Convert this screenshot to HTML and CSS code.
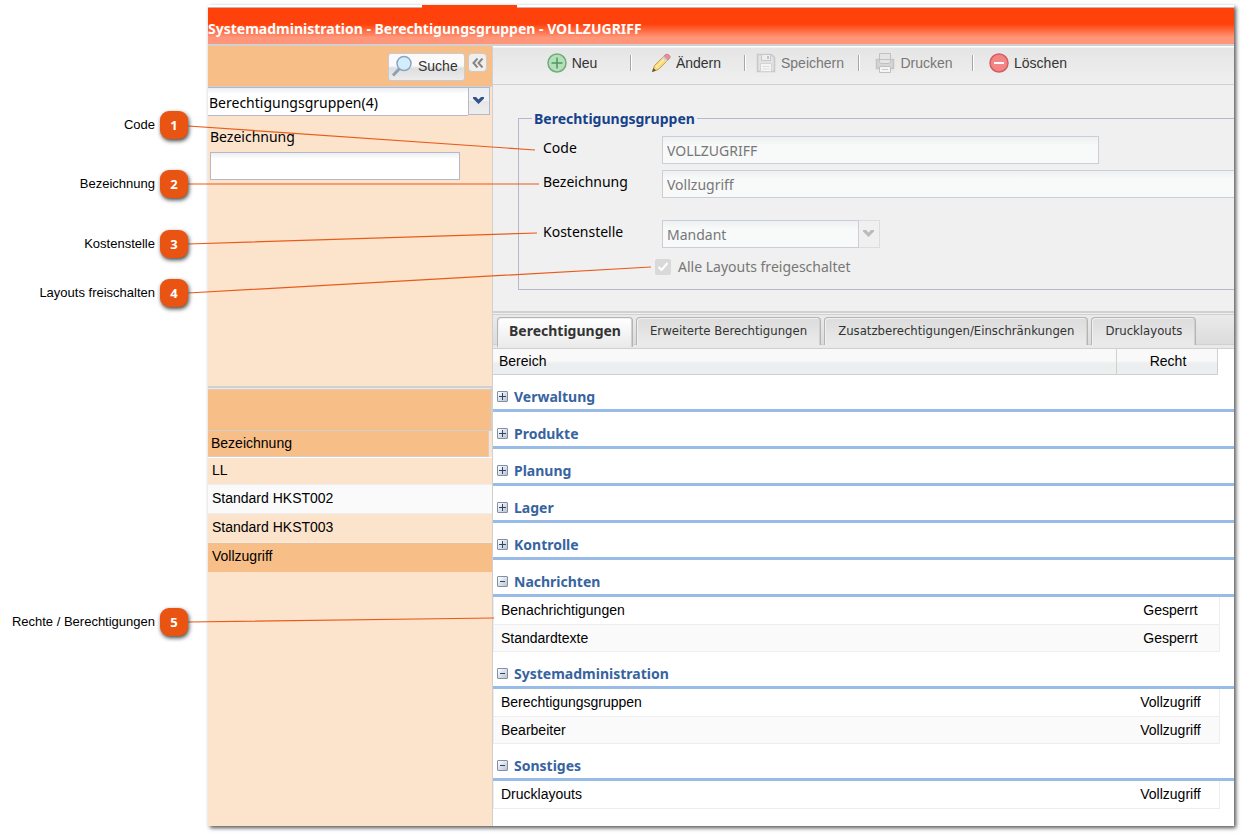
FILE: index.html
```html
<!DOCTYPE html>
<html lang="de">
<head>
<meta charset="utf-8">
<title>Systemadministration - Berechtigungsgruppen</title>
<link rel="stylesheet" href="styles.css">
</head>
<body>
<div class="page">
  <div class="window">
    <header class="titlebar">
      <div class="titlebar-edge"></div>
      <h1 class="title">Systemadministration - Berechtigungsgruppen - VOLLZUGRIFF</h1>
    </header>
    <div class="body">
      <aside class="sidebar">
        <div class="search-bar">
          <button class="search-button" type="button">
            <svg width="22" height="22" viewBox="0 0 22 22"><path d="M2 20.500L9 13" stroke="#8fa0b2" stroke-width="3"/><circle cx="13" cy="8.500" r="7" fill="#d3edfd" stroke="#8aa5bf" stroke-width="1.500"/></svg>
            Suche
          </button>
          <button class="collapse-button" type="button" aria-label="Einklappen">
            <svg width="12" height="10" viewBox="0 0 12 10"><path d="M5.500 0.500L1.500 5L5.500 9.500M10.500 0.500L6.500 5L10.500 9.500" fill="none" stroke="#858585" stroke-width="2"/></svg>
          </button>
        </div>
        <div class="combo">
          <select class="combo-field" aria-label="Suchbereich"><option>Berechtigungsgruppen(4)</option></select>
          <span class="combo-trigger"><svg width="11" height="7" viewBox="0 0 11 7"><path d="M0 0H3L5.500 2.500L8 0H11V1.500L5.500 7L0 1.500Z" fill="#34518d"/></svg></span>
        </div>
        <div class="filter">
          <label for="filter-name">Bezeichnung</label>
          <input class="field" id="filter-name" type="text">
        </div>
        <div class="results">
          <div class="results-bar"></div>
          <table class="result-table">
            <thead><tr><th><span>Bezeichnung</span></th></tr></thead>
            <tbody>
              <tr><td>LL</td></tr>
              <tr class="alt"><td>Standard HKST002</td></tr>
              <tr><td>Standard HKST003</td></tr>
              <tr class="selected"><td>Vollzugriff</td></tr>
            </tbody>
          </table>
        </div>
      </aside>
      <main class="main">
        <div class="toolbar">
          <button class="tool" type="button">
            <svg width="20" height="20" viewBox="0 0 20 20"><circle cx="10" cy="10" r="9" fill="#b5dfb9" stroke="#6fac7b" stroke-width="1.500"/><path d="M10 4.500V15.500M4.500 10H15.500" stroke="#4b9862" stroke-width="1.500"/></svg>
            Neu</button>
          <span class="sep"></span>
          <button class="tool" type="button">
            <svg width="20" height="20" viewBox="0 0 20 20"><path d="M1.500 18.500L3.500 12.500L13.500 2.500L17.500 6.500L7.500 16.500Z" fill="#fbd977" stroke="#c1a15a"/><path d="M5 14.500L15 4.500" stroke="#fff0ad" stroke-width="1.500"/><path d="M12.500 3.500L14.500 1.500Q16 0.500 18 2T18.500 5.500L16.500 7.500Z" fill="#e98f91" stroke="#c9878a"/><path d="M12 4L16 8" stroke="#c9d4dc" stroke-width="2"/><path d="M1 19L2.500 15L5 17.500Z" fill="#5b5147"/></svg>
            Ändern</button>
          <span class="sep"></span>
          <button class="tool" type="button" disabled>
            <svg width="20" height="20" viewBox="0 0 20 20"><path d="M1.500 1.500H15.500L18.500 4.500V18.500H1.500Z" fill="#e2e2e2" stroke="#c8c8c8" stroke-width="1.500"/><path d="M5.500 1.500H14.500V7.500H5.500Z" fill="#eee" stroke="#c8c8c8"/><path d="M11 3H13V6H11Z" fill="#c4c4c4"/><path d="M4.500 10.500H15.500V18.500H4.500Z" fill="#f5f5f5" stroke="#d4d4d4"/><path d="M6.500 13.500H13.500M6.500 16H13.500" stroke="#ddd"/></svg>
            Speichern</button>
          <span class="sep"></span>
          <button class="tool" type="button" disabled>
            <svg width="20" height="20" viewBox="0 0 20 20"><path d="M1.500 6.500H18.500V15.500H1.500Z" fill="#d6d6d6" stroke="#c4c4c4" stroke-width="1.500"/><path d="M4.500 0.500H15.500V8.500Q15.500 10.500 13.500 10.500H6.500Q4.500 10.500 4.500 8.500Z" fill="#e5e5e5" stroke="#c0c0c0"/><path d="M5 6.500H15" stroke="#c0c0c0"/><path d="M4.500 13.500H15.500V19.500H4.500Z" fill="#f4f4f4" stroke="#c0c0c0"/><path d="M7 16.500H13" stroke="#ccc"/></svg>
            Drucken</button>
          <span class="sep"></span>
          <button class="tool" type="button">
            <svg width="20" height="20" viewBox="0 0 20 20"><circle cx="10" cy="10" r="9" fill="#f58484" stroke="#cf5f63" stroke-width="1.500"/><path d="M5 10H15" stroke="#fff" stroke-width="2"/></svg>
            Löschen</button>
        </div>
        <form class="form">
          <fieldset class="group-box">
            <legend>Berechtigungsgruppen</legend>
            <div class="form-row"><label for="code">Code</label><input class="field code-field" id="code" type="text" value="VOLLZUGRIFF" disabled></div>
            <div class="form-row"><label for="name">Bezeichnung</label><input class="field name-field" id="name" type="text" value="Vollzugriff" disabled></div>
            <div class="form-row spaced"><label for="cost">Kostenstelle</label>
              <div class="combo disabled">
                <select class="combo-field" id="cost" disabled><option>Mandant</option></select>
                <span class="combo-trigger"><svg width="11" height="7" viewBox="0 0 11 7"><path d="M0 0H3L5.500 2.500L8 0H11V1.500L5.500 7L0 1.500Z" fill="#bbb"/></svg></span>
              </div>
            </div>
            <label class="check"><input type="checkbox" checked disabled><svg width="16" height="16" viewBox="0 0 16 16"><path d="M3.500 8L6.500 11L12.500 4" fill="none" stroke="#fff" stroke-width="2"/></svg>Alle Layouts freigeschaltet</label>
          </fieldset>
        </form>
        <div class="tabs" role="tablist">
          <button class="tab active" type="button" role="tab" aria-selected="true">Berechtigungen</button>
          <button class="tab" type="button" role="tab">Erweiterte Berechtigungen</button>
          <button class="tab" type="button" role="tab">Zusatzberechtigungen/Einschränkungen</button>
          <button class="tab" type="button" role="tab">Drucklayouts</button>
        </div>
        <div class="rights">
          <table class="rights-head"><tr><th>Bereich</th><th class="right-col">Recht</th></tr></table>
          <button class="section closed" type="button"><span class="toggle"></span>Verwaltung</button>
          <button class="section closed" type="button"><span class="toggle"></span>Produkte</button>
          <button class="section closed" type="button"><span class="toggle"></span>Planung</button>
          <button class="section closed" type="button"><span class="toggle"></span>Lager</button>
          <button class="section closed" type="button"><span class="toggle"></span>Kontrolle</button>
          <button class="section" type="button"><span class="toggle"></span>Nachrichten</button>
          <table class="rights-table">
            <tr><td>Benachrichtigungen</td><td class="right-col">Gesperrt</td></tr>
            <tr><td>Standardtexte</td><td class="right-col">Gesperrt</td></tr>
          </table>
          <button class="section" type="button"><span class="toggle"></span>Systemadministration</button>
          <table class="rights-table">
            <tr><td>Berechtigungsgruppen</td><td class="right-col">Vollzugriff</td></tr>
            <tr><td>Bearbeiter</td><td class="right-col">Vollzugriff</td></tr>
          </table>
          <button class="section" type="button"><span class="toggle"></span>Sonstiges</button>
          <table class="rights-table">
            <tr><td>Drucklayouts</td><td class="right-col">Vollzugriff</td></tr>
          </table>
        </div>
      </main>
    </div>
  </div>
  <svg class="leaders" width="660" height="640" viewBox="0 0 660 640">
    <path d="M188 126L535 150M188 184H539M188 244L537 233M188 293L651 267M188 622L494 618" fill="none" stroke="#ea5b1b" stroke-width="1.200"/>
  </svg>
  <div class="callout c1">Code<span class="badge">1</span></div>
  <div class="callout c2">Bezeichnung<span class="badge">2</span></div>
  <div class="callout c3">Kostenstelle<span class="badge">3</span></div>
  <div class="callout c4">Layouts freischalten<span class="badge">4</span></div>
  <div class="callout c5">Rechte / Berechtigungen<span class="badge">5</span></div>
</div>
</body>
</html>
```
FILE: styles.css
```css
* { box-sizing: border-box; }

:root {
  --sans: "Liberation Sans", Arial, sans-serif;
  --ui: "Noto Sans", Tahoma, sans-serif;
  --line: #d0d0d0;
  --field-line: #b5b8c8;
}

body {
  margin: 0;
  background: #fff;
  color: #000;
  font: 14px/18px var(--sans);
}

button, input, select { font: inherit; color: inherit; margin: 0; }
button { cursor: pointer; }
table { border-collapse: separate; border-spacing: 0; }
th, td { padding: 0; font-weight: normal; text-align: left; }
svg { flex: none; }

.page {
  position: relative;
  display: flex;
  min-height: 100vh;
  padding: 5px 9px 9px 208px;
}

.window {
  flex: 1;
  min-width: 0;
  display: flex;
  flex-direction: column;
  overflow: clip;
  background: #fff;
  box-shadow: 2px 2px 4px #555;
}

/* Title bar */
.titlebar {
  height: 41px;
  border-bottom: 2px solid var(--line);
  display: flex;
  flex-direction: column;
}
.titlebar-edge {
  height: 3px;
  background: linear-gradient(#ff420b, #ff420b) 214px 0 / 95px 3px no-repeat, linear-gradient(#fff 2px, #c9b5b0 2px);
}
.title {
  flex: 1;
  margin: 0;
  padding-top: 12px;
  background: linear-gradient(#ff420b 45%, #ff967a 82%);
  color: #fff;
  font: bold 14px/18px var(--ui);
  white-space: nowrap;
}

.body { flex: 1; display: flex; }

/* Sidebar */
.sidebar {
  flex: none;
  width: 285px;
  border-right: 1px solid var(--line);
  background: #fce3cb;
  display: flex;
  flex-direction: column;
}
.search-bar {
  height: 41px;
  padding: 7px 5px 0 0;
  background: #f7be87;
  border-bottom: 1px solid var(--line);
  display: flex;
  justify-content: flex-end;
  align-items: flex-start;
  gap: 3px;
}
.search-button {
  height: 28px;
  width: 77px;
  padding: 0 2px 2px;
  display: flex;
  align-items: center;
  gap: 5px;
  border: 1px solid #c8ccd2;
  border-radius: 3px;
  background: linear-gradient(#fafafa 45%, #dedede 55%, #ececec);
  color: #333;
}
.collapse-button {
  width: 19px;
  height: 19px;
  padding: 0;
  display: grid;
  place-items: center;
  border: 1px solid #ccc;
  border-radius: 4px;
  background: #f0efee;
}
.combo { display: flex; height: 29px; padding-right: 2px; }
.combo-field {
  flex: 1;
  appearance: none;
  padding: 2px 0 0 1px;
  border: solid var(--field-line);
  border-width: 1px 0;
  border-radius: 0;
  background: linear-gradient(#eceff1, #fff 6px);
  font: 14px/18px var(--ui);
}
.combo-trigger {
  width: 22px;
  height: 28px;
  padding: 0 2px 2px 0;
  display: grid;
  place-items: center;
  border: 1px solid var(--field-line);
  background: linear-gradient(#e9eef5, #f2f2f2 50%, #e6e6e6 50%, #eee);
}
.filter { height: 270px; padding: 12px 32px 0 2px; font: 14px/18px var(--ui); }
.filter label { display: block; margin-bottom: 6px; }
.field {
  height: 28px;
  padding: 0 4px;
  border: 1px solid var(--field-line);
  border-radius: 0;
  background: linear-gradient(#eceff1, #fff 6px);
  font: 14px/18px var(--ui);
}
.filter .field { width: 100%; display: block; }
.results-bar {
  height: 45px;
  border: solid var(--line);
  border-width: 2px 1px 1px 0;
  background: linear-gradient(#fce3cb 1px, var(--line) 1px 2px, #f7be87 2px);
}
.result-table { width: 100%; }
.result-table th { height: 27px; border-bottom: 1px solid #fff; padding-right: 3px; }
.result-table th span {
  display: block;
  padding: 3px 3px 4px;
  border: solid var(--line);
  border-width: 0 1px 1px 0;
  background: #f7be87;
}
.result-table td { height: 29px; padding: 0 0 2px 4px; border-bottom: 1px solid #ededed; }
.result-table tr:first-child td { height: 27px; }
.result-table .alt td { background: #fafafa; }
.result-table .selected td { background: #f7be87; border-color: #f7be87; }

/* Toolbar */
.main { flex: 1; min-width: 0; display: flex; flex-direction: column; }
.toolbar {
  height: 39px;
  padding: 0 0 4px 25px;
  display: flex;
  align-items: center;
  border-bottom: 1px solid var(--line);
  background: linear-gradient(#fff 1px, #e5e5e5 2px, #f0f0f0);
}
.tool {
  width: 112px;
  padding: 0 4px 0 0;
  display: flex;
  justify-content: center;
  align-items: center;
  gap: 5px;
  border: 0;
  background: none;
  color: #333;
}
.tool:disabled { color: #777; }
.sep { width: 2px; height: 16px; background: linear-gradient(90deg, #aca899 1px, #fff 1px); }

/* Form */
.form { height: 226px; padding: 24px 0 0 25px; background: #f0f0f0; }
.group-box {
  min-width: 0;
  height: 181px;
  margin: 0;
  padding: 8px 0 0 24px;
  border: 1px solid var(--field-line);
  border-right: 0;
  font: 14px/18px var(--ui);
}
.group-box legend { margin-left: -11px; padding: 1px 2px 0; color: #15428b; font-weight: bold; }
.form-row { display: flex; margin-bottom: 6px; }
.form-row label { width: 119px; padding-top: 3px; flex: none; }
.form-row.spaced { margin-top: 22px; }
.form .field:disabled { background: linear-gradient(#eef1f1, #f8f9f9 8px); border-color: #cccdd9; color: #777; opacity: 1; }
.code-field { width: 437px; }
.name-field { flex: 1; border-right: 0; }
.combo.disabled { width: 218px; height: 28px; padding: 0; color: #777; }
.combo.disabled .combo-field { padding-left: 4px; border: 1px solid #cccdd9; background: linear-gradient(#eef1f1, #f8f9f9 8px); opacity: 1; }
.combo.disabled .combo-trigger { width: 21px; border: 1px solid #ddd; border-left: 0; background: #f0f0f0; }
.check { display: grid; grid-template-columns: 16px 1fr; gap: 7px; align-items: center; margin: 10px 0 0 112px; color: #777; }
.check input { grid-area: 1 / 1; appearance: none; width: 16px; height: 16px; border-radius: 2px; background: #d9d9d9; }
.check svg { grid-area: 1 / 1; }

/* Tabs */
.tabs {
  height: 38px;
  padding: 4px 0 0 4px;
  display: flex;
  align-items: flex-start;
  gap: 3px;
  border: solid var(--line);
  border-width: 2px 0 1px;
  background: linear-gradient(#f0f0f0 1px, var(--line) 1px 2px, #eaeaea 2px, #dcdcdc 31px, var(--line) 31px 32px, #e9e9e9 32px);
}
.tab {
  height: 28px;
  padding: 0 13px 1px;
  border: 1px solid #b4b4b4;
  border-bottom: 0;
  border-radius: 4px 4px 0 0;
  background: linear-gradient(#dcdcdc, #ebebeb);
  box-shadow: inset 1px 1px #f0f0f0, inset -1px 0 #d0d0d0;
  color: #333;
  font: 13px/18px "DejaVu Sans Condensed", Tahoma, sans-serif;
  white-space: nowrap;
}
.tab.active { height: 30px; padding: 0 11px 3px; background: linear-gradient(#fff, #eaeaea); font: bold 14px/18px var(--ui); }

/* Rights */
.rights-head {
  width: calc(100% - 16px);
  background: linear-gradient(#f9f9f9 45%, #eceef0 55%, #edeef0);
}
.rights-head th { height: 26px; padding: 0 0 2px 6px; border: solid var(--line); border-width: 0 1px 1px 0; }
.right-col { width: 101px; }
.rights-head .right-col { text-align: center; padding: 0 0 2px 2px; }
.section {
  width: 100%;
  height: 37px;
  padding: 9px 4px 0;
  display: flex;
  align-items: center;
  gap: 6px;
  border: 0;
  border-bottom: 3px solid #99bbe8;
  background: #fff;
  color: #3764a0;
  font: bold 14px/18px var(--ui);
}
.toggle {
  width: 11px;
  height: 11px;
  border: 1px solid #8290a6;
  border-radius: 1px;
  background: linear-gradient(#34445e, #34445e) center / 5px 1px no-repeat, linear-gradient(135deg, #fff, #b7c3d5);
}
.closed .toggle {
  background: linear-gradient(#34445e, #34445e) center / 7px 1px no-repeat, linear-gradient(#34445e, #34445e) center / 1px 7px no-repeat, linear-gradient(135deg, #fff, #b7c3d5);
}
.rights-table { width: calc(100% - 14px); border: solid #ededed; border-width: 0 1px; }
.rights-table td { height: 28px; padding: 0 0 2px 7px; border-bottom: 1px solid #ededed; }
.rights-table .right-col { text-align: center; padding-left: 4px; }
.rights-table tr:nth-child(2) td { height: 27px; padding-bottom: 0; background: #fafafa; }

/* Annotations */
.leaders { position: absolute; left: 0; top: 0; pointer-events: none; }
.callout {
  position: absolute;
  left: 0;
  width: 188px;
  display: flex;
  justify-content: flex-end;
  align-items: center;
  gap: 5px;
  font-size: 13px;
  line-height: 20px;
  white-space: nowrap;
}
.badge {
  width: 28px;
  height: 28px;
  display: grid;
  place-items: center;
  border-radius: 9px;
  background: #e95412;
  box-shadow: 1px 2px 4px #444;
  color: #fff;
  font: bold 13px/16px "Open Sans", sans-serif;
}
.c1 { top: 111px; }
.c2 { top: 170px; }
.c3 { top: 230px; }
.c4 { top: 279px; }
.c5 { top: 608px; }
```
